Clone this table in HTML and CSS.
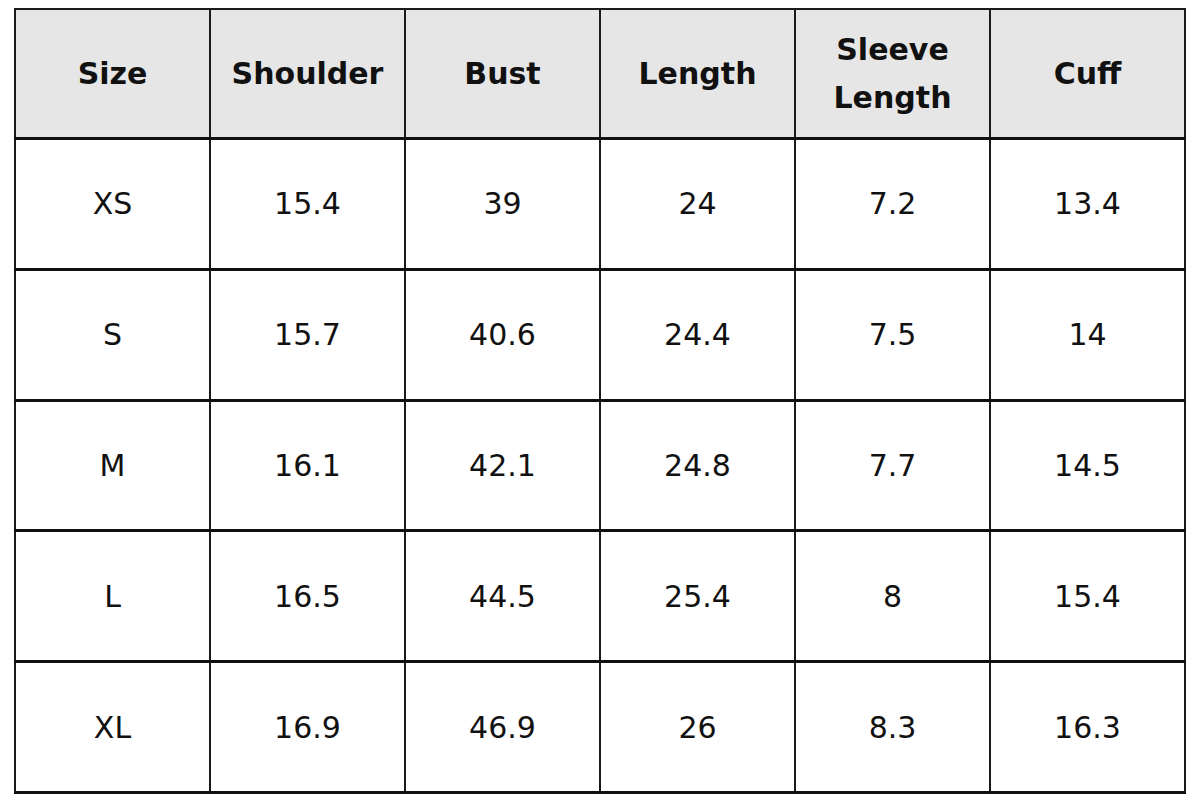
FILE: index.html
```html
<!DOCTYPE html>
<html>
<head>
<meta charset="utf-8">
<link rel="stylesheet" href="styles.css">
</head>
<body>
<div class="page">
<table class="sizes">
<colgroup><col class="c"><col class="c"><col class="c"><col class="c"><col class="c"><col class="c"></colgroup>
<thead>
<tr class="head"><th>Size</th><th>Shoulder</th><th>Bust</th><th>Length</th><th>Sleeve<br>Length</th><th>Cuff</th></tr>
</thead>
<tbody>
<tr><td>XS</td><td>15.4</td><td>39</td><td>24</td><td>7.2</td><td>13.4</td></tr>
<tr><td>S</td><td>15.7</td><td>40.6</td><td>24.4</td><td>7.5</td><td>14</td></tr>
<tr><td>M</td><td>16.1</td><td>42.1</td><td>24.8</td><td>7.7</td><td>14.5</td></tr>
<tr><td>L</td><td>16.5</td><td>44.5</td><td>25.4</td><td>8</td><td>15.4</td></tr>
<tr><td>XL</td><td>16.9</td><td>46.9</td><td>26</td><td>8.3</td><td>16.3</td></tr>
</tbody>
</table>
</div>
</body>
</html>
```
FILE: styles.css
```css
html, body {
  margin: 0;
  padding: 0;
  background: #ffffff;
}
.page {
  padding: 8px 14px;
}
.sizes {
  width: 1172px;
  border-collapse: collapse;
  table-layout: fixed;
  border: 2px solid #4a4a4a;
  font-family: "DejaVu Sans", "Inter", sans-serif;
  color: #111111;
}
.c {
  width: 195px;
}
.sizes th, .sizes td {
  border: 2px solid #1a1a1a;
  text-align: center;
  vertical-align: middle;
  padding: 0;
}
.sizes th {
  background: #e6e6e6;
  font-weight: 700;
  font-size: 30px;
  line-height: 48px;
  height: 127px;
  border-bottom: 3px solid #111111;
}
.sizes td {
  font-size: 30px;
  font-weight: 400;
  height: 127.8px;
}
.sizes tbody tr td {
  border-bottom: 3px solid #111111;
}
```
